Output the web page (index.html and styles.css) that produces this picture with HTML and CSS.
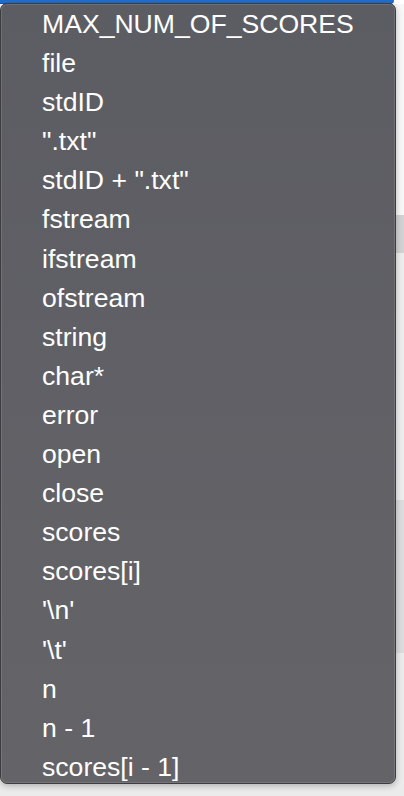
FILE: index.html
```html
<!DOCTYPE html>
<html lang="en">
<head>
  <meta charset="UTF-8">
  <meta name="viewport" content="width=device-width, initial-scale=1.0">
  <title>Completion menu</title>
  <link rel="stylesheet" href="styles.css">
</head>
<body>
  <div class="editor">
    <div class="top-bar"></div>
    <div class="area area-top"></div>
    <div class="area area-band"></div>
    <div class="area area-light"></div>
    <div class="area area-mid"></div>
    <div class="area area-bottom"></div>
  </div>

  <div class="menu">
    <ul class="menu-list">
      <li>MAX_NUM_OF_SCORES</li>
      <li>file</li>
      <li>stdID</li>
      <li>".txt"</li>
      <li>stdID + ".txt"</li>
      <li>fstream</li>
      <li>ifstream</li>
      <li>ofstream</li>
      <li>string</li>
      <li>char*</li>
      <li>error</li>
      <li>open</li>
      <li>close</li>
      <li>scores</li>
      <li>scores[i]</li>
      <li>'\n'</li>
      <li>'\t'</li>
      <li>n</li>
      <li>n - 1</li>
      <li>scores[i - 1]</li>
    </ul>
  </div>
</body>
</html>
```

FILE: styles.css
```css
body {
  margin: 0;
  padding: 0;
  width: 404px;
  height: 796px;
  overflow: hidden;
  background-color: #ffffff;
  font-family: 'Liberation Sans', Arial, sans-serif;
}

.editor {
  display: flex;
  flex-direction: column;
  height: 100%;
}

.top-bar {
  height: 4px;
  width: 394px;
  background-color: #1f6fd0;
  border-bottom: 1px solid #0d56b0;
  border-radius: 0 0 4px 0;
  box-sizing: border-box;
}

.area-top { height: 211px; background-color: #f7f7f7; }
.area-band { height: 38px; background-color: #d2d2d4; }
.area-light { height: 247px; background-color: #ededee; }
.area-mid { height: 153px; background-color: #dcdcde; }
.area-bottom { flex: 1; background-color: #ebebeb; }

.menu {
  position: absolute;
  top: 3px;
  left: 0;
  width: 396px;
  height: 781px;
  box-sizing: border-box;
  background: linear-gradient(#5c5d63, #646468);
  border: 1px solid #3d3d40;
  border-radius: 7px;
  box-shadow: inset 0 0 0 1px rgba(255, 255, 255, 0.12), 0 2px 6px rgba(0, 0, 0, 0.25);
}

.menu-list {
  list-style: none;
  margin: 0;
  padding: 1px 0 0 41px;
}

.menu-list li {
  height: 39.1px;
  line-height: 39px;
  font-size: 26.6px;
  color: #ffffff;
  white-space: nowrap;
}
```
